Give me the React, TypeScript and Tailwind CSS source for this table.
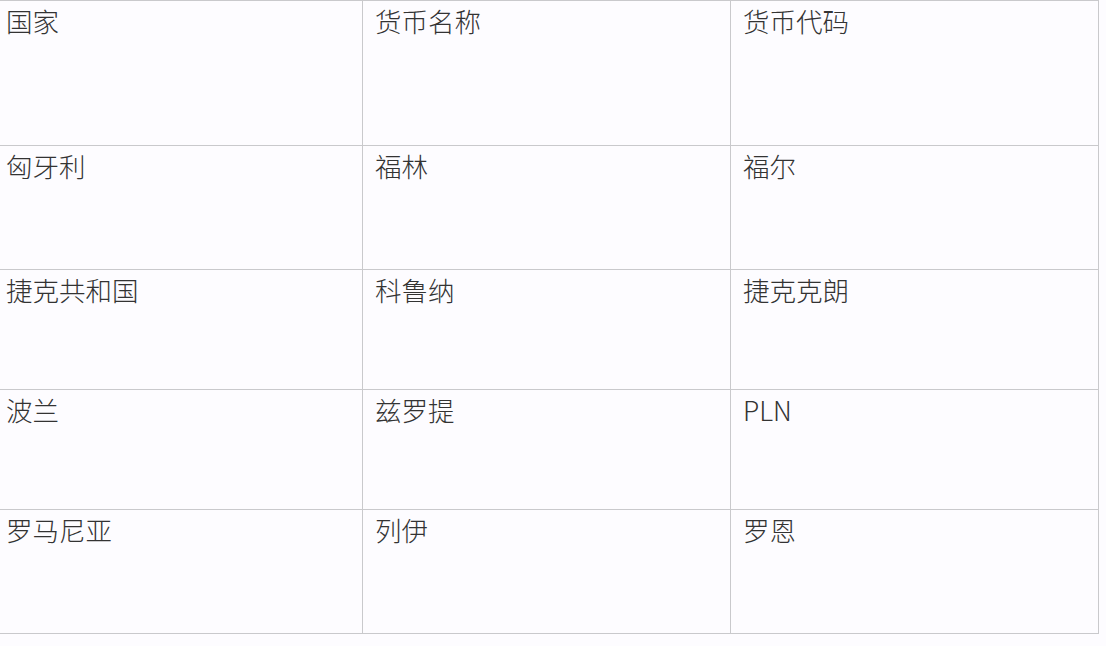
import React from "react";

const rows: { h: string; cells: string[] }[] = [
  { h: "h-[144px]", cells: ["国家", "货币名称", "货币代码"] },
  { h: "h-[124px]", cells: ["匈牙利", "福林", "福尔"] },
  { h: "h-[120px]", cells: ["捷克共和国", "科鲁纳", "捷克克朗"] },
  { h: "h-[120px]", cells: ["波兰", "兹罗提", "PLN"] },
  { h: "h-[124px]", cells: ["罗马尼亚", "列伊", "罗恩"] },
];

export default function App() {
  return (
    <div
      className="w-[1106px] h-[646px] bg-[#fdfcff] overflow-hidden text-[#333333]"
      style={{ fontFamily: '"Noto Sans CJK SC", "Noto Sans", sans-serif' }}
    >
      <div className="w-[1099px] border-t border-b border-[#c9c9cc]">
        {rows.map((r, i) => (
          <div
            key={i}
            className={`flex ${r.h} ${i > 0 ? "border-t border-[#c9c9cc]" : ""}`}
          >
            {r.cells.map((c, j) => (
              <div
                key={j}
                className={`${j === 0 ? "w-[363px] pl-[6px]" : "w-[368px] pl-[12px]"} shrink-0 border-r border-[#c9c9cc] pt-[6px] text-[26.5px] leading-[27px] font-light`}
              >
                {c}
              </div>
            ))}
          </div>
        ))}
      </div>
    </div>
  );
}
